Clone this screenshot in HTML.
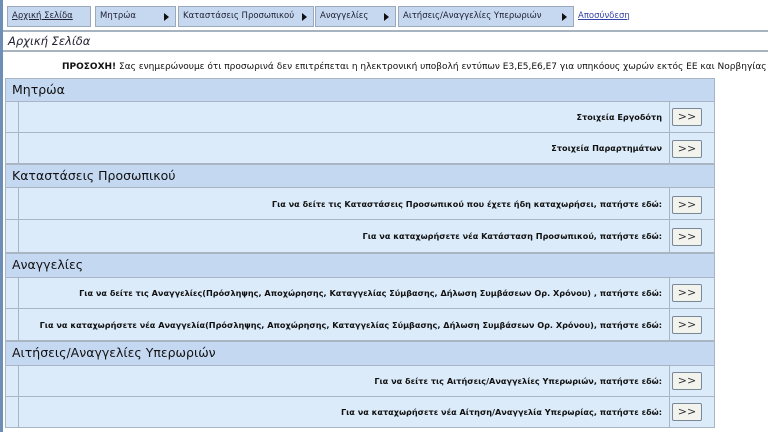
<!DOCTYPE html>
<html><head><meta charset="utf-8"><style>
*{margin:0;padding:0;box-sizing:border-box}
body{width:768px;height:432px;background:#fff;position:relative;overflow:hidden;font-family:"DejaVu Sans","Liberation Sans",sans-serif;color:#111}
.lb{position:absolute;left:0;top:0;width:3px;height:432px;background:#6d8fb5}
.nav{position:absolute;top:6px;height:21px;background:#c5d8ef;border:1px solid #9aaabb;font-size:8.5px;line-height:19px;padding-left:4px;color:#223}
.nav b.t{position:absolute;right:6px;top:6px;width:0;height:0;border-left:5px solid #111;border-top:4px solid transparent;border-bottom:4px solid transparent}
.hl{position:absolute;left:3px;right:0;height:2px;background:#a7b3bf}
.r{position:absolute;left:5px;width:710px}
.h{background:#c5d8f2;border:1px solid #a9b5c2;font-size:12.5px;line-height:22px;padding-left:6px;font-family:"DejaVu Sans",sans-serif}
.row{background:#dcebfa;border:1px solid #a9b5c2;border-top:none}
.row .c1{position:absolute;left:0;top:0;bottom:0;width:13px;border-right:1px solid #a9b5c2}
.row .c3{position:absolute;left:663px;top:0;bottom:0;border-left:1px solid #a9b5c2;width:1px}
.row .tx{position:absolute;right:52px;top:0;bottom:0;display:flex;align-items:center;font-size:8.15px;font-weight:bold;white-space:nowrap}
.btn{position:absolute;left:672px;width:30px;height:18px;border:1px solid #7a8797;border-radius:2px;background:#f3f3ee;font-size:11px;text-align:center;line-height:16px;color:#333}
</style></head><body>
<div class="lb"></div>
<div class="nav" style="left:7px;width:84px;text-decoration:underline;color:#223">Αρχική Σελίδα</div>
<div class="nav" style="left:95px;width:81px">Μητρώα<b class="t"></b></div>
<div class="nav" style="left:178px;width:136px">Καταστάσεις Προσωπικού<b class="t"></b></div>
<div class="nav" style="left:315px;width:81px">Αναγγελίες<b class="t"></b></div>
<div class="nav" style="left:398px;width:176px">Αιτήσεις/Αναγγελίες Υπερωριών<b class="t"></b></div>
<div style="position:absolute;left:578px;top:6px;line-height:21px;font-size:8.5px;color:#3344aa;text-decoration:underline">Αποσύνδεση</div>
<div class="hl" style="top:30px"></div>
<div style="position:absolute;left:8px;top:34px;font-size:11.5px;font-style:italic;color:#223">Αρχική Σελίδα</div>
<div class="hl" style="top:50px"></div>
<div style="position:absolute;left:62px;top:62px;font-size:9px;white-space:nowrap"><b>ΠΡΟΣΟΧΗ!</b> Σας ενημερώνουμε ότι προσωρινά δεν επιτρέπεται η ηλεκτρονική υποβολή εντύπων Ε3,Ε5,Ε6,Ε7 για υπηκόους χωρών εκτός ΕΕ και Νορβηγίας</div>

<div class="r h" style="top:78px;height:24px">Μητρώα</div>
<div class="r row" style="top:102px;height:31px"><div class="c1"></div><div class="tx">Στοιχεία Εργοδότη</div><div class="c3"></div></div>
<div class="r row" style="top:133px;height:31px"><div class="c1"></div><div class="tx">Στοιχεία Παραρτημάτων</div><div class="c3"></div></div>
<div class="r h" style="top:164px;height:24px">Καταστάσεις Προσωπικού</div>
<div class="r row" style="top:188px;height:32px"><div class="c1"></div><div class="tx">Για να δείτε τις Καταστάσεις Προσωπικού που έχετε ήδη καταχωρήσει, πατήστε εδώ:</div><div class="c3"></div></div>
<div class="r row" style="top:220px;height:33px"><div class="c1"></div><div class="tx">Για να καταχωρήσετε νέα Κατάσταση Προσωπικού, πατήστε εδώ:</div><div class="c3"></div></div>
<div class="r h" style="top:253px;height:25px">Αναγγελίες</div>
<div class="r row" style="top:278px;height:31px"><div class="c1"></div><div class="tx">Για να δείτε τις Αναγγελίες(Πρόσληψης, Αποχώρησης, Καταγγελίας Σύμβασης, Δήλωση Συμβάσεων Ορ. Χρόνου) , πατήστε εδώ:</div><div class="c3"></div></div>
<div class="r row" style="top:309px;height:32px"><div class="c1"></div><div class="tx">Για να καταχωρήσετε νέα Αναγγελία(Πρόσληψης, Αποχώρησης, Καταγγελίας Σύμβασης, Δήλωση Συμβάσεων Ορ. Χρόνου), πατήστε εδώ:</div><div class="c3"></div></div>
<div class="r h" style="top:341px;height:25px">Αιτήσεις/Αναγγελίες Υπερωριών</div>
<div class="r row" style="top:366px;height:31px"><div class="c1"></div><div class="tx">Για να δείτε τις Αιτήσεις/Αναγγελίες Υπερωριών, πατήστε εδώ:</div><div class="c3"></div></div>
<div class="r row" style="top:397px;height:31px"><div class="c1"></div><div class="tx">Για να καταχωρήσετε νέα Αίτηση/Αναγγελία Υπερωρίας, πατήστε εδώ:</div><div class="c3"></div></div>

<div class="btn" style="top:108px">&gt;&gt;</div>
<div class="btn" style="top:140px">&gt;&gt;</div>
<div class="btn" style="top:196px">&gt;&gt;</div>
<div class="btn" style="top:228px">&gt;&gt;</div>
<div class="btn" style="top:284px">&gt;&gt;</div>
<div class="btn" style="top:316px">&gt;&gt;</div>
<div class="btn" style="top:372px">&gt;&gt;</div>
<div class="btn" style="top:403px">&gt;&gt;</div>
</body></html>
